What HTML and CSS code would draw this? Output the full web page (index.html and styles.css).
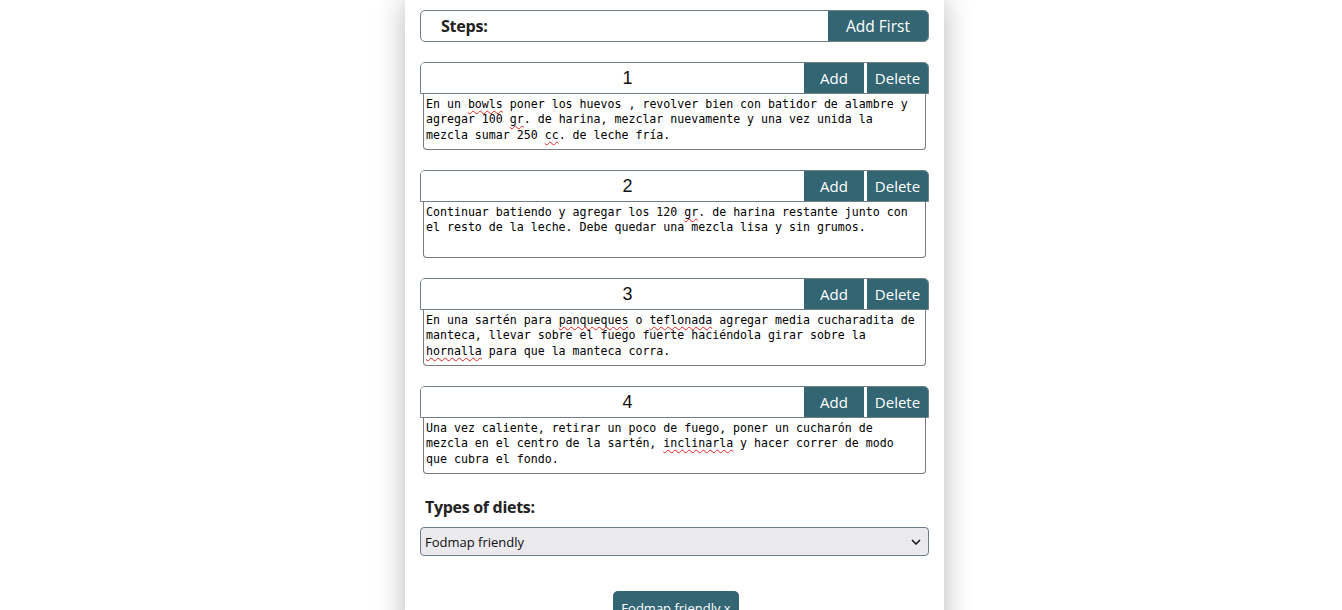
FILE: index.html
```html
<!DOCTYPE html>
<html lang="es">
<head>
<meta charset="utf-8">
<title>Recipe steps</title>
<link rel="stylesheet" href="styles.css">
</head>
<body>
<div class="page">
  <main class="card">
    <div class="steps-head">
      <span class="steps-label">Steps:</span>
      <button class="btn btn-first">Add First</button>
    </div>

    <section class="step">
      <div class="step-bar">
        <input class="step-num" type="text" value="1">
        <button class="btn btn-add">Add</button>
        <button class="btn btn-del">Delete</button>
      </div>
      <div class="step-text">En un <span class="sp">bowls</span> poner los huevos , revolver bien con batidor de alambre y agregar 100 <span class="sp">gr</span>. de harina, mezclar nuevamente y una vez unida la mezcla sumar 250 <span class="sp">cc</span>. de leche fría.</div>
    </section>

    <section class="step">
      <div class="step-bar">
        <input class="step-num" type="text" value="2">
        <button class="btn btn-add">Add</button>
        <button class="btn btn-del">Delete</button>
      </div>
      <div class="step-text">Continuar batiendo y agregar los 120 <span class="sp">gr</span>. de harina restante junto con el resto de la leche. Debe quedar una mezcla lisa y sin grumos.</div>
    </section>

    <section class="step">
      <div class="step-bar">
        <input class="step-num" type="text" value="3">
        <button class="btn btn-add">Add</button>
        <button class="btn btn-del">Delete</button>
      </div>
      <div class="step-text">En una sartén para <span class="sp">panqueques</span> o <span class="sp">teflonada</span> agregar media cucharadita de manteca, llevar sobre el fuego fuerte haciéndola girar sobre la <span class="sp">hornalla</span> para que la manteca corra.</div>
    </section>

    <section class="step">
      <div class="step-bar">
        <input class="step-num" type="text" value="4">
        <button class="btn btn-add">Add</button>
        <button class="btn btn-del">Delete</button>
      </div>
      <div class="step-text">Una vez caliente, retirar un poco de fuego, poner un cucharón de mezcla en el centro de la sartén, <span class="sp">inclinarla</span> y hacer correr de modo que cubra el fondo.</div>
    </section>

    <h3 class="diets-title">Types of diets:</h3>
    <div class="select">
      <span>Fodmap friendly</span>
      <svg class="chev" width="10" height="6" viewBox="0 0 10 6"><path d="M1 1l4 4 4-4" fill="none" stroke="#111" stroke-width="1.5"/></svg>
    </div>

    <div class="chips">
      <span class="chip">Fodmap friendly <span class="x">x</span></span>
    </div>
  </main>
</div>
</body>
</html>
```
FILE: styles.css
```css
* { box-sizing: border-box; }
html, body { margin: 0; padding: 0; background: #fff; }
body { font-family: "Open Sans", "Noto Sans", sans-serif; color: #222; overflow: hidden; height: 610px; }
.page { display: flex; justify-content: center; padding-left: 7px; }
.card {
  width: 539px;
  min-height: 640px;
  background: #fff;
  padding: 10px 15px 0 15px;
  box-shadow: 0 0 28px rgba(0,0,0,0.28);
}
.btn {
  background: #336573;
  color: #fff;
  border: none;
  font-family: "Open Sans", "Noto Sans", sans-serif;
  font-size: 15px;
  padding: 0;
  margin: 0;
  cursor: pointer;
}
.steps-head {
  display: flex;
  height: 32px;
  border: 1px solid #6f7c8a;
  border-radius: 5px;
  overflow: hidden;
  align-items: stretch;
}
.steps-label {
  flex: 1;
  padding-left: 20px;
  font-weight: 700;
  font-size: 16.2px;
  display: flex;
  align-items: center;
  color: #222;
  letter-spacing: -0.3px;
}
.btn-first { width: 100px; font-size: 15.5px; }
.step { margin-top: 20px; }
.step-bar {
  display: flex;
  height: 32px;
  border: 1px solid #6f7c8a;
  border-radius: 5px 5px 0 0;
  overflow: hidden;
  gap: 3px;
  background: #fff;
}
.step-num {
  flex: 1;
  min-width: 0;
  border: none;
  text-align: center;
  font-family: "Liberation Sans", Arial, sans-serif;
  font-size: 18px;
  color: #111;
  padding: 0 0 0 30px;
  margin-right: -3px;
  outline: none;
  background: #fff;
}
.btn-add { width: 60px; }
.btn-del { width: 61px; }
.step-text {
  margin: 0 3px 0 3px;
  height: 56px;
  border: 1px solid #7a7a7a;
  border-top: none;
  border-radius: 0 0 4px 4px;
  padding: 3px 8px 0 2px;
  font-family: "DejaVu Sans Mono", "Liberation Mono", monospace;
  font-size: 11.6px;
  line-height: 15.3px;
  color: #000;
}
.sp {
  text-decoration: underline wavy #e02020;
  text-decoration-thickness: 1px;
  text-underline-offset: 2px;
}
.diets-title {
  margin: 21px 0 0 5px;
  font-size: 16px;
  font-weight: 700;
  line-height: 24px;
  letter-spacing: -0.3px;
  color: #222;
}
.select {
  margin-top: 8px;
  height: 29px;
  border: 1px solid #6f7c8a;
  border-radius: 4px;
  background: #e9e9ee;
  display: flex;
  align-items: center;
  justify-content: space-between;
  padding: 0 5px 0 4px;
  font-size: 13px;
  color: #111;
}
.chev { margin-right: 2px; }
.chips {
  display: flex;
  justify-content: center;
  margin-top: 35px;
}
.chip {
  background: #336573;
  color: #fff;
  border-radius: 5px;
  padding: 7px 8px;
  font-size: 13px;
  line-height: 20px;
  margin-left: 3px;
}
```
